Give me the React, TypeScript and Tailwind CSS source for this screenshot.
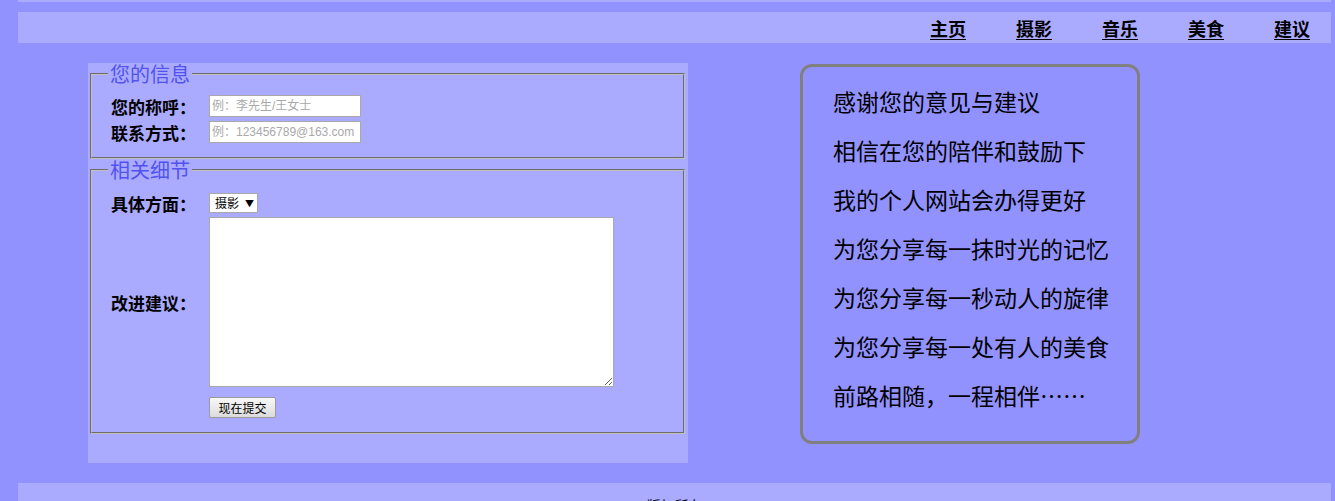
import React from "react"

const navLinks = ["主页", "摄影", "音乐", "美食", "建议"]

const thanks = [
  "感谢您的意见与建议",
  "相信在您的陪伴和鼓励下",
  "我的个人网站会办得更好",
  "为您分享每一抹时光的记忆",
  "为您分享每一秒动人的旋律",
  "为您分享每一处有人的美食",
  "前路相随，一程相伴……",
]

function Legend({ children }: { children: React.ReactNode }) {
  return <legend className="px-[2px] text-[20px] leading-[22px] text-[#5252ee]">{children}</legend>
}

function Label({ children }: { children: React.ReactNode }) {
  return <span className="w-[98px] shrink-0 text-[17px] font-bold leading-none">{children}</span>
}

function TextInput({ placeholder }: { placeholder: string }) {
  return (
    <input
      type="text"
      placeholder={placeholder}
      className="h-[22px] w-[152px] border border-[#a9a9a9] bg-white px-[2px] font-['Liberation_Sans','Noto_Sans_CJK_SC',sans-serif] text-[12px] outline-none placeholder:text-[#a9a9a9]"
    />
  )
}

function FeedbackForm() {
  return (
    <form className="ml-[70px] h-[400px] w-[600px] shrink-0 bg-[#aaaaff] pl-[2px] pr-[3px]">
      <fieldset className="border-2 border-[#c0c0c0] px-[16px] pb-[12px] pt-[8px] [border-style:groove]">
        <Legend>您的信息</Legend>
        <div className="flex h-[26px] items-center pl-[3px]">
          <Label>您的称呼：</Label>
          <TextInput placeholder="例：李先生/王女士" />
        </div>
        <div className="flex h-[26px] items-center pl-[3px]">
          <Label>联系方式：</Label>
          <TextInput placeholder="例：123456789@163.com" />
        </div>
      </fieldset>

      <fieldset className="border-2 border-[#c0c0c0] px-[16px] pb-[14px] pt-[11px] [border-style:groove]">
        <Legend>相关细节</Legend>
        <div className="flex flex-col gap-[3px] pl-[3px]">
          <div className="flex h-[22px] items-center">
            <Label>具体方面：</Label>
            <div className="flex h-[20px] w-[49px] items-center gap-[6px] border border-[#a9a9a9] bg-white pl-[5px] text-[12px] leading-none">
              <span>摄影</span>
              <span className="text-[9px]">▼</span>
            </div>
          </div>
          <div className="flex items-center">
            <Label>改进建议：</Label>
            <textarea className="h-[170px] w-[405px] border border-[#a9a9a9] bg-white p-[2px] text-[13px] outline-none" />
          </div>
          <div className="mt-[7px] flex">
            <span className="w-[98px] shrink-0" />
            <button
              type="button"
              className="h-[21px] w-[67px] rounded-[2px] border border-[#9a9a9a] bg-gradient-to-b from-[#f8f8f8] to-[#dcdcdc] text-[12px] leading-none"
            >
              现在提交
            </button>
          </div>
        </div>
      </fieldset>
    </form>
  )
}

function ThanksBox() {
  return (
    <div className="ml-[112px] mt-[1px] h-[380px] w-[340px] shrink-0 rounded-[12px] border-[3px] border-[#808080] pl-[30px] pt-[10px]">
      {thanks.map((line) => (
        <p key={line} className="text-[23px] leading-[49px]">
          {line}
        </p>
      ))}
    </div>
  )
}

export default function App() {
  return (
    <div className="h-[501px] overflow-hidden bg-[#9292ff] pl-[18px] pr-[4px] font-['Noto_Sans_CJK_SC',sans-serif] text-black">
      <div className="h-[2px] bg-[#aaaaff]" />
      <nav className="mt-[10px] flex h-[31px] items-center justify-end gap-[50px] bg-[#aaaaff] pr-[21px]">
        {navLinks.map((l) => (
          <a key={l} href="#" className="text-[18px] font-bold leading-none underline underline-offset-[3px]">
            {l}
          </a>
        ))}
      </nav>

      <main className="mt-[20px] flex items-start">
        <FeedbackForm />
        <ThanksBox />
      </main>

      <footer className="mt-[20px] h-[40px] bg-[#aaaaff] pt-[12px] text-center text-[14px]">版权所有</footer>
    </div>
  )
}
